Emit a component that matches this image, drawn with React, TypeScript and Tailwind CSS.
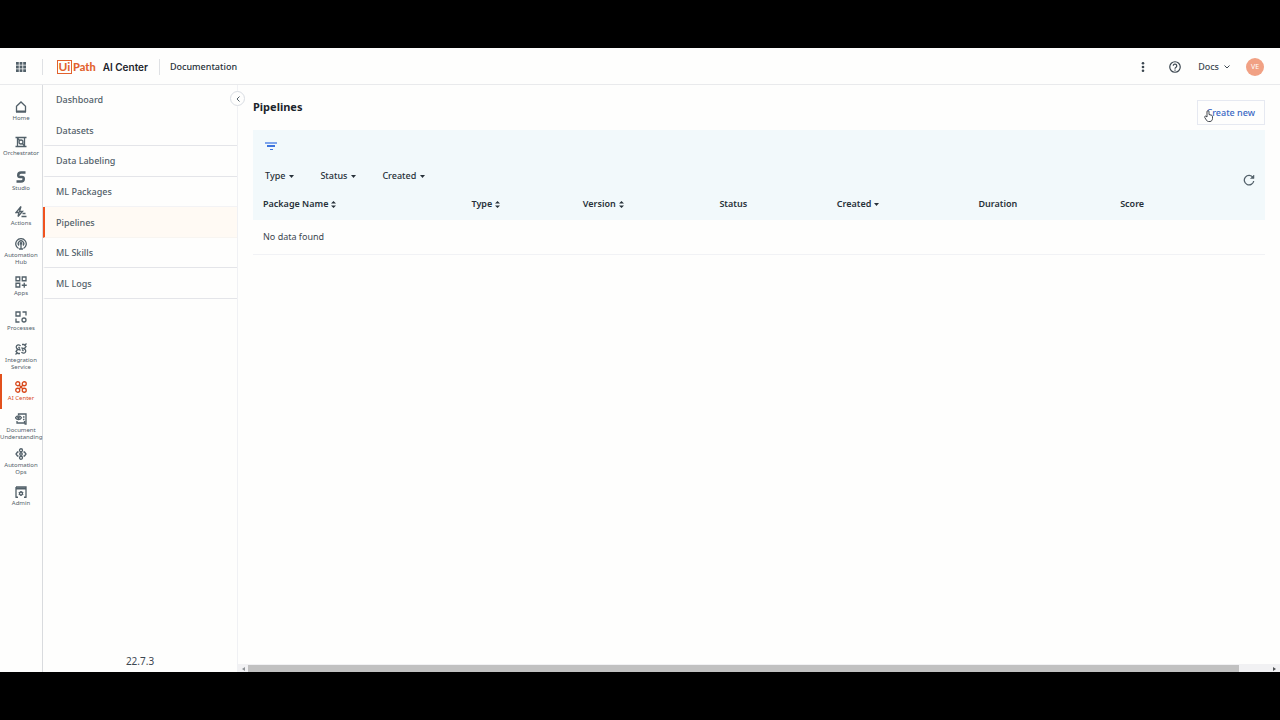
import type { ReactNode } from "react";
import { clsx } from "clsx";

type RailItem = { label: string; icon: ReactNode; active?: boolean };

const railItems: RailItem[] = [
    {
        label: "Home",
        icon: <path d="M3 10.500 12 2l9 8.500V20.500H3zM2 22h20" />,
    },
    {
        label: "Orchestrator",
        icon: (
            <>
                <path d="M1 3h22M5 3v18h14V3M1 21h4M19 21h4" />
                <circle cx="12" cy="12" r="4" />
                <path d="M5 4l4 5M19 20l-4-5" />
            </>
        ),
    },
    {
        label: "Studio",
        icon: <path strokeWidth="5" d="M21 3h-9a5.500 5.500 0 0 0-5.500 5.500c0 2.500 1.500 3.500 3.500 3.500h4c2 0 3.500 1 3.500 3.500A5.500 5.500 0 0 1 12 21H3" />,
    },
    {
        label: "Actions",
        icon: (
            <>
                <path d="M12 1 2 13h6l-2 8 9-10H9z" />
                <path d="M15 15h6M13 21h10" />
            </>
        ),
    },
    {
        label: "Automation Hub",
        icon: (
            <>
                <path d="M7 21a10.500 10.500 0 1 1 10 0" />
                <path d="M8 15a5.500 5.500 0 1 1 8 0" />
                <circle cx="12" cy="11" r="1.500" />
                <path d="M12 13v9M8 22h8" />
            </>
        ),
    },
    {
        label: "Apps",
        icon: (
            <>
                <path d="M2 2h7.500v7.500H2zM14.500 2H22v7.500h-7.500zM2 14.500h7.500V22H2z" />
                <path d="M18.500 13.500v10M13.500 18.500h10" />
            </>
        ),
    },
    {
        label: "Processes",
        icon: (
            <>
                <path d="M2 2h8v8H2zM15 2h7v7M2 15v7h7" />
                <circle cx="18" cy="18" r="4" />
            </>
        ),
    },
    {
        label: "Integration Service",
        icon: (
            <>
                <path d="M11 6a4.500 4.500 0 1 0-5 6.500M13 18a4.500 4.500 0 1 0 5-6.500" />
                <path d="M14 3h4l4 4-3 4h-4l-2-2M10 21H6l-4-4 3-4h4l2 2" />
                <path d="M7 8l3 3M14 13l3 3M20 4l3-3M4 20l-3 3" />
            </>
        ),
    },
    {
        label: "AI Center",
        active: true,
        icon: (
            <>
                <circle cx="5.500" cy="5.500" r="4" />
                <circle cx="18.500" cy="5.500" r="4" />
                <circle cx="5.500" cy="18.500" r="4" />
                <circle cx="18.500" cy="18.500" r="4" />
                <path d="M8 8l3 3M16 8l-8 8M13 13l3 3" />
            </>
        ),
    },
    {
        label: "Document Understanding",
        icon: (
            <>
                <path d="M7 4V2h15v20h-3M7 20H4v-4M7 20h12v-4" />
                <path d="M1 9.500c3-5 9-5 12 0-3 5-9 5-12 0zM16 8h3M16 13h3" />
                <circle cx="7" cy="9.500" r="1.500" />
            </>
        ),
    },
    {
        label: "Automation Ops",
        icon: (
            <>
                <circle cx="12" cy="12" r="2.500" />
                <circle cx="12" cy="4.500" r="3" />
                <circle cx="12" cy="19.500" r="3" />
                <path d="M7 8H5l-3 4 3 4h2M17 8h2l3 4-3 4h-2" />
            </>
        ),
    },
    {
        label: "Admin",
        icon: (
            <>
                <path d="M2 2h20v21M2 2v21M1 22.500h5M18 22.500h5" />
                <path d="M2 5h20" strokeWidth="4" />
                <circle cx="12" cy="15" r="3" />
                <path d="M12 10v2M12 18v2M7.500 12.500l2 1M14.500 16.500l2 1M7.500 17.500l2-1M14.500 13.500l2-1" />
            </>
        ),
    },
];

const navItems = [
    { label: "Dashboard", border: "border-b-transparent" },
    { label: "Datasets", border: "border-b-[#e4e5e9]" },
    { label: "Data Labeling", border: "border-b-[#e4e5e9]" },
    { label: "ML Packages", border: "border-b-[#f3f3f5]" },
    { label: "Pipelines", border: "border-b-[#f8f5f1]", active: true },
    { label: "ML Skills", border: "border-b-[#e4e5e9]" },
    { label: "ML Logs", border: "border-b-[#e4e5e9]" },
];

const filters = ["Type", "Status", "Created"];

const columns: { label: string; width: string; sort?: "both" | "desc" }[] = [
    { label: "Package Name", width: "w-[20.6%]", sort: "both" },
    { label: "Type", width: "w-[11%]", sort: "both" },
    { label: "Version", width: "w-[13.5%]", sort: "both" },
    { label: "Status", width: "w-[11.6%]" },
    { label: "Created", width: "w-[14%]", sort: "desc" },
    { label: "Duration", width: "w-[14%]" },
    { label: "Score", width: "w-[15.3%]" },
];

const Caret = () => (
    <svg viewBox="0 0 5 3" className="h-[3px] w-[5px] shrink-0 fill-current" aria-hidden="true">
        <path d="M0 0h5L2.500 3z" />
    </svg>
);

const SortArrows = () => (
    <svg viewBox="0 0 5 7" className="h-[7px] w-[5px] shrink-0 fill-current" aria-hidden="true">
        <path d="M0 2.500h5L2.500 0zM0 4.500h5L2.500 7z" />
    </svg>
);

const Header = () => (
    <header className="flex h-[37px] shrink-0 items-center border-b border-[#e9eaec] pt-px pr-4">
        <button type="button" aria-label="App launcher" className="flex w-[42px] justify-center text-[#526069]">
            <svg viewBox="0 0 10 10" className="h-[10px] w-[10px] fill-current">
                <path d="M0 0h2.800v2.800H0zM3.600 0h2.800v2.800H3.600zM7.200 0H10v2.800H7.200zM0 3.600h2.800v2.800H0zM3.600 3.600h2.800v2.800H3.600zM7.200 3.600H10v2.800H7.200zM0 7.200h2.800V10H0zM3.600 7.200h2.800V10H3.600zM7.200 7.200H10V10H7.200z" />
            </svg>
        </button>
        <div className="h-4 border-l border-[#dfe1e4]" />
        <a href="#" className="ml-[14px] flex items-center text-[#e2622e]">
            <span className="flex h-[14px] w-[15px] items-center justify-center border border-current font-['Lato'] text-[12px] leading-none font-bold">
                Ui
            </span>
            <span className="ml-px font-['Lato'] text-[11px] leading-none font-black">Path</span>
            <span className="ml-[7px] font-['Inter'] text-[10px] leading-none font-semibold text-[#1c242b]">AI Center</span>
        </a>
        <div className="ml-[11px] h-4 border-l border-[#dfe1e4]" />
        <a href="#" className="ml-[10px] font-medium text-[#273139]">
            Documentation
        </a>
        <div className="ml-auto flex items-center text-[#3c4750]">
            <button type="button" aria-label="More">
                <svg viewBox="0 0 4 10" className="h-[10px] w-1 fill-current">
                    <circle cx="2" cy="1.300" r="1.300" />
                    <circle cx="2" cy="5" r="1.300" />
                    <circle cx="2" cy="8.700" r="1.300" />
                </svg>
            </button>
            <button type="button" aria-label="Help" className="ml-6">
                <svg viewBox="0 0 24 24" className="h-3 w-3 fill-none stroke-current" strokeWidth="2.400">
                    <circle cx="12" cy="12" r="10.500" />
                    <path d="M8.500 9.500a3.500 3.500 0 1 1 5.500 3c-1.300.8-2 1.500-2 3M12 17v2.500" />
                </svg>
            </button>
            <button type="button" className="ml-[17px] flex items-center gap-[5px] font-medium">
                Docs
                <svg viewBox="0 0 6 4" className="h-1 w-[6px] fill-none stroke-current">
                    <path d="M.500.500 3 3 5.500.500" />
                </svg>
            </button>
            <button
                type="button"
                aria-label="Account"
                className="ml-4 flex h-[18px] w-[18px] items-center justify-center rounded-full bg-[#f1a184] text-[7px] text-white"
            >
                VE
            </button>
        </div>
    </header>
);

const Rail = () => (
    <nav aria-label="Services" className="w-[43px] shrink-0 border-r border-[#d9dbde] pt-[9px]">
        {railItems.map(({ label, icon, active }) => (
            <a
                key={label}
                href="#"
                className={clsx(
                    "flex h-[35px] flex-col items-center justify-center border-x-2 border-r-transparent text-center text-[6px] leading-[7px]",
                    active ? "border-l-[#e2501c] text-[#d8481a]" : "border-l-transparent text-[#526069]",
                )}
            >
                <svg viewBox="0 0 24 24" className="mb-[2px] h-3 w-3 shrink-0 fill-none stroke-current" strokeWidth="2.600">
                    {icon}
                </svg>
                <span className="-mx-1 w-[42px]">{label}</span>
            </a>
        ))}
    </nav>
);

const SideNav = () => (
    <aside className="relative flex w-[195px] shrink-0 flex-col border-r border-[#f0f1f4]">
        <nav aria-label="AI Center" className="grid h-[214px] auto-rows-fr">
            {navItems.map(({ label, border, active }) => (
                <a
                    key={label}
                    href="#"
                    className={clsx(
                        "flex items-center border-b border-l-2 pt-px pl-[11px] font-medium text-[#526069]",
                        border,
                        active ? "border-l-[#f0521e] bg-[#fffaf4]" : "border-l-transparent",
                    )}
                >
                    {label}
                </a>
            ))}
        </nav>
        <p className="mt-auto pb-1 text-center text-[10px] leading-[14px] text-[#3c4750]">22.7.3</p>
        <button
            type="button"
            aria-label="Collapse"
            className="absolute top-[6px] -right-2 flex h-[15px] w-[15px] items-center justify-center rounded-full border border-[#d9dde3] bg-[#fefefd] text-[#526069]"
        >
            <svg viewBox="0 0 4 6" className="h-[6px] w-1 fill-none stroke-current">
                <path d="M3.500.500 1 3l2.500 2.500" />
            </svg>
        </button>
    </aside>
);

const Pipelines = () => (
    <main className="flex-1 px-[15px]">
        <div className="flex items-start justify-between pt-[15px]">
            <h1 className="text-[11px] leading-[14px] font-bold text-[#1c242b]">Pipelines</h1>
            <button
                type="button"
                className="relative h-[25px] w-[68px] border border-[#e6e9f1] pr-[9px] text-right font-medium text-[#3a68c4]"
            >
                Create new
                <svg viewBox="0 0 18 24" className="absolute top-[9px] left-[6px] h-3 w-[9px]" aria-hidden="true">
                    <path
                        d="M6 14V3.500a2 2 0 0 1 4 0V9l5 1.500c1.500.5 2 1.500 2 3V17c0 3-2 6-5 6H9c-2 0-3-1-4-2.500L1.500 15c-1-2 1-3.500 2.500-2.500z"
                        fill="#fff"
                        stroke="#30363c"
                        strokeWidth="1.800"
                    />
                </svg>
            </button>
        </div>
        <section className="mt-[5px] flex h-[60px] items-end justify-between bg-[#f2f9fb]">
            <div className="flex h-full flex-col pt-[12px] pl-3">
                <button type="button" aria-label="Filters" className="w-3">
                    <svg viewBox="0 0 12 8" className="h-2 w-3 fill-[#3d74de]">
                        <path d="M0 0h12v2H0z" className="fill-[#7fa6ec]" />
                        <path d="M2 3h8v2H2zM5 7h3v1H5z" />
                    </svg>
                </button>
                <div className="mt-auto flex gap-[26px] pb-2">
                    {filters.map((filter) => (
                        <button key={filter} type="button" className="flex items-center gap-1 font-medium text-[#273139]">
                            {filter}
                            <Caret />
                        </button>
                    ))}
                </div>
            </div>
            <button type="button" aria-label="Refresh" className="mr-[10px] mb-1 text-[#526069]">
                <svg viewBox="0 0 24 24" className="h-3 w-3 fill-none stroke-current" strokeWidth="2.600">
                    <path d="M20 7a9.500 9.500 0 1 0 1.500 7" />
                    <path d="M22 2v7h-7z" className="fill-current" strokeWidth="1" />
                </svg>
            </button>
        </section>
        <table className="w-full table-fixed border-collapse text-left">
            <thead>
                <tr className="h-[30px] bg-[#f2f9fb] text-[#273139]">
                    {columns.map(({ label, width, sort }) => (
                        <th key={label} scope="col" className={clsx("pb-[2px] pl-[10px] font-semibold", width)}>
                            <span className="flex items-center gap-[3px]">
                                {label}
                                {sort === "both" && <SortArrows />}
                                {sort === "desc" && <Caret />}
                            </span>
                        </th>
                    ))}
                </tr>
            </thead>
            <tbody>
                <tr className="h-[34px] border-b border-[#f1f2f5]">
                    <td colSpan={columns.length} className="pl-[10px] text-[#3c4750]">
                        No data found
                    </td>
                </tr>
            </tbody>
        </table>
    </main>
);

const ScrollTrack = () => (
    <div className="flex h-2 items-end bg-[#f1f1f3]">
        <div className="flex h-[7px] w-[10px] items-center justify-center">
            <svg viewBox="0 0 3 4" className="h-1 w-[3px] fill-[#8d9195]">
                <path d="M3 0v4L0 2z" />
            </svg>
        </div>
        <div className="h-[7px] flex-1 bg-[#c1c1c1]" />
        <div className="flex h-[7px] w-[41px] items-center justify-end pr-1">
            <svg viewBox="0 0 3 4" className="h-1 w-[3px] fill-[#505356]">
                <path d="M0 0v4l3-2z" />
            </svg>
        </div>
    </div>
);

export default function App() {
    return (
        <div className="flex min-h-screen flex-col bg-black py-12 font-['Noto_Sans',sans-serif] text-[9px] leading-[12px]">
            <div className="flex flex-1 flex-col bg-[#fefefd]">
                <Header />
                <div className="flex flex-1">
                    <Rail />
                    <SideNav />
                    <div className="flex min-w-0 flex-1 flex-col">
                        <Pipelines />
                        <ScrollTrack />
                    </div>
                </div>
            </div>
        </div>
    );
}
